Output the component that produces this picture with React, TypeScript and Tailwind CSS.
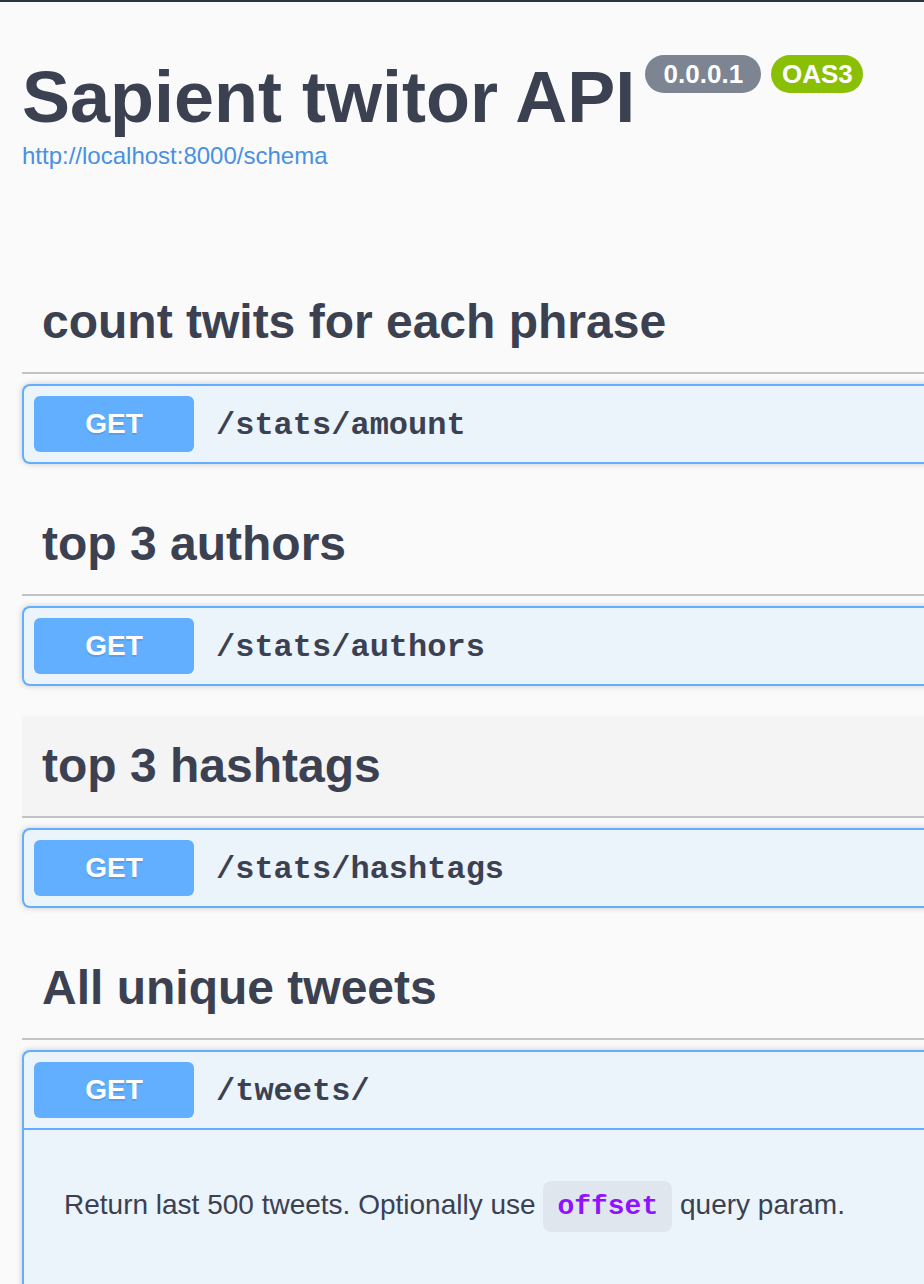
import React from "react";

const sans = { fontFamily: '"Liberation Sans", Arial, sans-serif' };

function Method() {
  return (
    <div
      className="flex h-[56px] w-[160px] shrink-0 items-center justify-center rounded-[6px] bg-[#61affe] text-[28px] font-bold text-white [text-shadow:0_2px_0_rgba(0,0,0,0.1)]"
      style={sans}
    >
      GET
    </div>
  );
}

function Summary({ path, open }: { path: string; open?: boolean }) {
  return (
    <div
      className={
        "flex items-center p-[10px] " + (open ? "border-b-2 border-[#61affe]" : "")
      }
    >
      <Method />
      <span className="mt-[3px] pl-[22px] font-['Liberation_Mono',monospace] text-[32px] font-bold text-[#3b4151]">
        {path}
      </span>
    </div>
  );
}

function Tag({ title, hover }: { title: string; hover?: boolean }) {
  return (
    <div
      className={
        "mb-[10px] flex h-[102px] items-center border-b-2 border-[#c1c3c7] pl-[20px] " +
        (hover ? "bg-[#f4f4f4]" : "")
      }
    >
      <h3 className="text-[48px] font-bold leading-[60px] text-[#3b4151]" style={sans}>
        {title}
      </h3>
    </div>
  );
}

function Block({ path }: { path: string }) {
  return (
    <div className="mb-[30px] rounded-[8px] border-2 border-r-0 border-[#61affe] bg-[#ebf3fb] shadow-[0_0_6px_rgba(0,0,0,0.19)]">
      <Summary path={path} />
    </div>
  );
}

export default function App() {
  return (
    <div className="h-[1284px] w-[924px] overflow-hidden bg-[#fafafa]" style={sans}>
      <div className="h-[2px] w-full bg-[#2b363d]" />
      <div className="w-[1200px] pl-[22px]">
        <div className="mt-[59px] flex items-start">
          <h2 className="text-[72px] font-bold leading-[72px] text-[#3b4151]" style={sans}>
            Sapient twitor API
          </h2>
          <div className="-mt-[6px] ml-[10px] flex gap-[10px]">
            <span className="flex h-[38px] w-[116px] items-center justify-center rounded-full bg-[#7d8492] text-[26px] font-bold text-white">
              0.0.0.1
            </span>
            <span className="flex h-[38px] w-[92px] items-center justify-center rounded-full bg-[#89bf04] text-[26px] font-bold text-white">
              OAS3
            </span>
          </div>
        </div>
        <div className="mt-[9px] text-[24px] leading-[28px] text-[#4990e2]">
          http://localhost:8000/schema
        </div>

        <div className="mt-[102px]">
          <Tag title="count twits for each phrase" />
          <Block path="/stats/amount" />
          <Tag title="top 3 authors" />
          <Block path="/stats/authors" />
          <Tag title="top 3 hashtags" hover />
          <Block path="/stats/hashtags" />
          <Tag title="All unique tweets" />
          <div className="rounded-[8px] border-2 border-r-0 border-[#61affe] bg-[#ebf3fb] shadow-[0_0_6px_rgba(0,0,0,0.19)]">
            <Summary path="/tweets/" open />
            <div className="h-[400px] px-[40px] pt-[54px]">
              <p className="text-[28px] leading-[42px] text-[#3b4151]">
                Return last 500 tweets. Optionally use{" "}
                <code className="rounded-[8px] bg-[rgba(0,0,0,0.05)] px-[14px] py-[10px] font-['Liberation_Mono',monospace] text-[28px] font-bold text-[#9012fe]">
                  offset
                </code>{" "}
                query param.
              </p>
            </div>
          </div>
        </div>
      </div>
    </div>
  );
}
